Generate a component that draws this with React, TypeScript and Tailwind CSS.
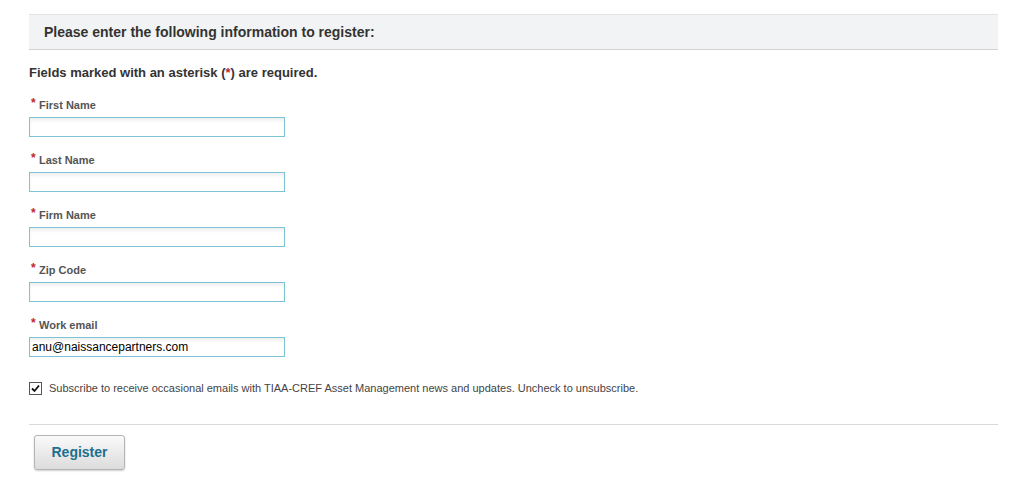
import { Fragment } from "react";

type Field = {
  label: string;
  value?: string;
};

const fields: Field[] = [
  { label: "First Name" },
  { label: "Last Name" },
  { label: "Firm Name" },
  { label: "Zip Code" },
  { label: "Work email", value: "anu@naissancepartners.com" },
];

const App = () => {
  return (
    <Fragment>
      <div
        className="bg-white min-h-screen pl-[29px] pr-[11px] pt-[14px] text-[#333]"
        style={{ fontFamily: '"Liberation Sans", Arial, sans-serif' }}
      >
        {/* HEADER */}
        <div className="h-[36px] flex items-center bg-[#f2f3f4] border-t border-t-[#e3e3e3] border-b border-b-[#d2d2d2] pl-[15px]">
          <p className="text-[14px] font-bold text-[#333]">
            Please enter the following information to register:
          </p>
        </div>

        <p className="mt-[15px] text-[13px] leading-[16px] font-bold text-[#333]">
          Fields marked with an asterisk (<span className="text-[#c1272d]">*</span>) are required.
        </p>

        {/* FIELDS */}
        <div className="mt-[17px] flex flex-col gap-[16px]">
          {fields.map((item, index) => (
            <div key={index} className="flex flex-col gap-[5px]">
              <label className="flex items-start text-[11px] leading-[14px] font-bold text-[#555]">
                <span className="text-[#c1272d] text-[12px] leading-[10px] pl-[2px] w-[10px]">*</span>
                {item.label}
              </label>
              <input
                type="text"
                defaultValue={item.value}
                className="w-[256px] h-[20px] border border-[#7cc3d6] px-[2px] text-[12px] text-black bg-white shadow-[inset_0_3px_3px_rgba(0,0,0,0.06)] outline-none"
              />
            </div>
          ))}
        </div>

        {/* SUBSCRIBE */}
        <div className="mt-[23px] flex items-center gap-[7px]">
          <span className="w-[13px] h-[13px] border border-[#555] bg-white flex items-center justify-center">
            <svg width="11" height="11" viewBox="0 0 11 11">
              <path d="M2 5.5 L4.5 8 L9 2.5" fill="none" stroke="#111" strokeWidth="1.8" />
            </svg>
          </span>
          <span className="text-[11px] text-[#444]">
            Subscribe to receive occasional emails with TIAA-CREF Asset Management news and updates. Uncheck to unsubscribe.
          </span>
        </div>

        <div className="mt-[27px] border-t border-[#d9d9d9]" />

        {/* REGISTER */}
        <div className="mt-[10px] pl-[5px]">
          <button className="w-[91px] h-[35px] rounded-[3px] border border-[#b4b4b4] bg-gradient-to-b from-[#fafafa] to-[#dcdcdc] shadow-[0_1px_2px_rgba(0,0,0,0.2)] text-[14px] font-bold text-[#1d6f8f]">
            Register
          </button>
        </div>
      </div>
    </Fragment>
  );
};

export default App;
